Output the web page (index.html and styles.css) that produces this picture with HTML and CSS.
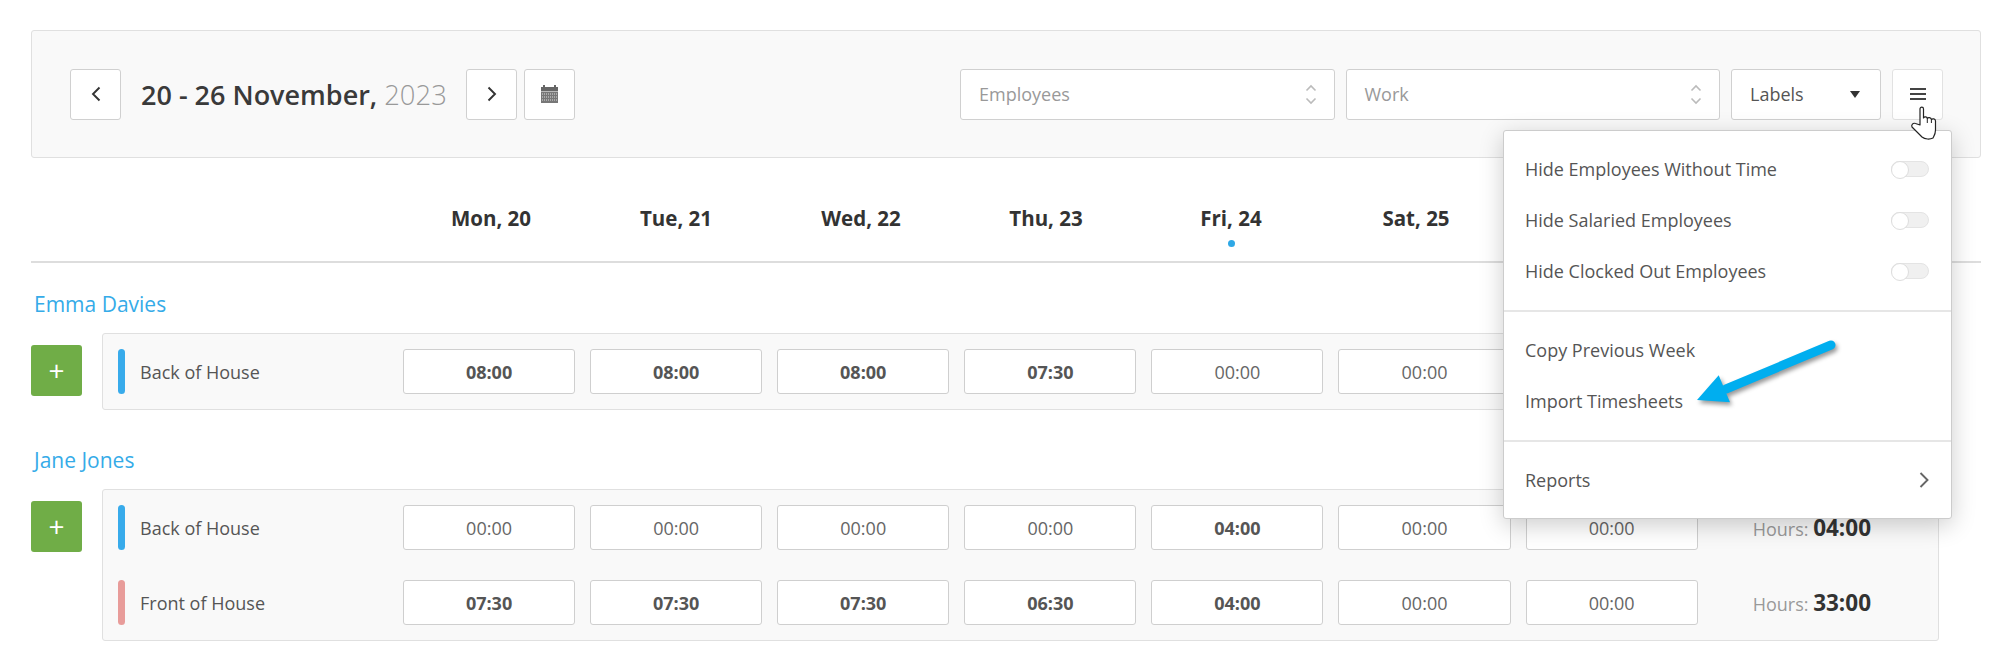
FILE: index.html
```html
<!DOCTYPE html>
<html lang="en">
<head>
  <meta charset="UTF-8" />
  <title>Timesheets</title>
  <link rel="stylesheet" href="styles.css">
</head>
<body>
  <div class="toolbar">
    <button class="btn-square">
      <svg width="10" height="16" viewBox="0 0 10 16"><path d="M8.5 1.5 2 8l6.5 6.5" fill="none" stroke="#333" stroke-width="1.9"/></svg>
    </button>
    <div class="week-title">20 - 26 November, <span class="week-year">2023</span></div>
    <button class="btn-square">
      <svg width="10" height="16" viewBox="0 0 10 16"><path d="M1.5 1.5 8 8l-6.5 6.5" fill="none" stroke="#333" stroke-width="1.9"/></svg>
    </button>
    <button class="btn-square btn-calendar">
      <svg width="17" height="18" viewBox="0 0 17 18">
        <path d="M0 2h2V0h2v2h9V0h2v2h2v4H0z" fill="#666"/>
        <rect y="6.5" width="17" height="11.5" fill="#777"/>
        <path d="M1 9h15M1 12h15M1 15h15" stroke="#ddd" stroke-width="1" stroke-dasharray="1 1"/>
      </svg>
    </button>

    <div class="filters">
      <div class="select select-wide">
        <span class="placeholder">Employees</span>
        <svg width="12" height="21" viewBox="0 0 12 21"><path d="M1.5 6.5 6 2l4.500 4.500M1.500 14.500 6 19l4.500-4.500" fill="none" stroke="#bbb" stroke-width="1.6"/></svg>
      </div>
      <div class="select select-wide">
        <span class="placeholder">Work</span>
        <svg width="12" height="21" viewBox="0 0 12 21"><path d="M1.5 6.500 6 2l4.500 4.500M1.500 14.500 6 19l4.500-4.500" fill="none" stroke="#bbb" stroke-width="1.6"/></svg>
      </div>
      <div class="select select-labels">
        <span>Labels</span>
        <span class="caret"></span>
      </div>
      <button class="btn-menu"><span class="burger"></span></button>
    </div>
  </div>

  <div class="days">
    <div>Mon, 20</div>
    <div>Tue, 21</div>
    <div>Wed, 22</div>
    <div>Thu, 23</div>
    <div class="today">Fri, 24</div>
    <div>Sat, 25</div>
  </div>

  <div class="employee">
    <a class="employee-name">Emma Davies</a>
    <div class="employee-body">
      <button class="btn-add">+</button>
      <div class="work-box">
        <div class="work-row">
          <span class="work-bar bar-blue"></span>
          <span class="work-label">Back of House</span>
          <div class="cell filled">08:00</div>
          <div class="cell filled">08:00</div>
          <div class="cell filled">08:00</div>
          <div class="cell filled">07:30</div>
          <div class="cell">00:00</div>
          <div class="cell">00:00</div>
          <div class="cell">00:00</div>
          <div class="hours">Hours: <b>31:30</b></div>
        </div>
      </div>
    </div>
  </div>

  <div class="employee">
    <a class="employee-name">Jane Jones</a>
    <div class="employee-body">
      <button class="btn-add">+</button>
      <div class="work-box">
        <div class="work-row">
          <span class="work-bar bar-blue"></span>
          <span class="work-label">Back of House</span>
          <div class="cell">00:00</div>
          <div class="cell">00:00</div>
          <div class="cell">00:00</div>
          <div class="cell">00:00</div>
          <div class="cell filled">04:00</div>
          <div class="cell">00:00</div>
          <div class="cell">00:00</div>
          <div class="hours">Hours: <b>04:00</b></div>
        </div>
        <div class="work-row">
          <span class="work-bar bar-pink"></span>
          <span class="work-label">Front of House</span>
          <div class="cell filled">07:30</div>
          <div class="cell filled">07:30</div>
          <div class="cell filled">07:30</div>
          <div class="cell filled">06:30</div>
          <div class="cell filled">04:00</div>
          <div class="cell">00:00</div>
          <div class="cell">00:00</div>
          <div class="hours">Hours: <b>33:00</b></div>
        </div>
      </div>
    </div>
  </div>

  <div class="menu">
    <div class="menu-section">
      <div class="menu-item">Hide Employees Without Time <span class="toggle"></span></div>
      <div class="menu-item">Hide Salaried Employees <span class="toggle"></span></div>
      <div class="menu-item">Hide Clocked Out Employees <span class="toggle"></span></div>
    </div>
    <div class="menu-section">
      <div class="menu-item">Copy Previous Week</div>
      <div class="menu-item">Import Timesheets</div>
    </div>
    <div class="menu-section menu-last">
      <div class="menu-item">Reports
        <svg width="10" height="16" viewBox="0 0 10 16"><path d="M1.500 1 8.500 8l-7 7" fill="none" stroke="#666" stroke-width="1.900"/></svg>
      </div>
    </div>
  </div>

  <svg class="arrow" width="150" height="72" viewBox="0 0 150 72">
    <line x1="141" y1="7" x2="36" y2="51" stroke="#00aeef" stroke-width="9" stroke-linecap="round"/>
    <path d="M7 62 28.700 37.300 40 64.300z" fill="#00aeef"/>
  </svg>

  <svg class="hand" width="32" height="38" viewBox="0 0 32 38">
    <path d="M12 21V5c0-2.500 3.500-2.500 3.500 0v9c.5-1.500 3.500-1.500 3.800.5.700-1.500 3.700-1.300 4.100 1 1.100-1.300 4.100-.7 4.100 1.500v9c0 4-1.500 6-2.500 8-3 1.500-8 1.500-11-1L4 23c-1-2 1-4.500 3.500-3.500z" fill="#fff" stroke="#222" stroke-width="1.200" stroke-linejoin="round"/>
    <path d="M19.300 14.500V19M23.400 15.500V19" fill="none" stroke="#222" stroke-width="1"/>
  </svg>
</body>
</html>
```

FILE: styles.css
```css
* {
  box-sizing: border-box;
}

body {
  font-family: 'Open Sans', sans-serif;
  font-size: 18px;
  background-color: #ffffff;
  margin: 0;
  padding: 30px 29px 0 31px;
  color: #555;
  position: relative;
  overflow: hidden;
  height: 670px;
}

button {
  font-family: inherit;
  cursor: pointer;
}

.toolbar {
  display: flex;
  align-items: center;
  height: 128px;
  padding: 0 37px 0 38px;
  background: #f9f9f9;
  border: 1px solid #e0e0e0;
  border-radius: 3px;
}

.btn-square {
  width: 51px;
  height: 51px;
  padding: 0;
  display: flex;
  align-items: center;
  justify-content: center;
  background: #fff;
  border: 1px solid #d0d0d0;
  border-radius: 3px;
}

.btn-calendar {
  margin-left: 7px;
}

.week-title {
  width: 345px;
  padding-left: 20px;
  font-size: 27px;
  font-weight: 600;
  color: #3a3a3a;
  white-space: nowrap;
}

.week-year {
  font-weight: 300;
  font-size: 27.4px;
  color: #999;
}

.filters {
  margin-left: auto;
  display: flex;
  gap: 11px;
}

.select {
  height: 51px;
  display: flex;
  align-items: center;
  justify-content: space-between;
  background: #fff;
  border: 1px solid #d0d0d0;
  border-radius: 3px;
}

.select-wide {
  width: 374.5px;
  padding: 0 17px 0 18px;
}

.placeholder {
  color: #999;
}

.select-labels {
  width: 150px;
  padding: 0 20px 0 18px;
}

.caret {
  width: 0;
  height: 0;
  border-left: 5px solid transparent;
  border-right: 5px solid transparent;
  border-top: 7px solid #333;
}

.btn-menu {
  width: 51px;
  height: 51px;
  padding: 0;
  display: flex;
  align-items: center;
  justify-content: center;
  background: #fff;
  border: 1px solid #e2e2e2;
  border-radius: 3px;
}

.burger {
  display: block;
  width: 16px;
  height: 12px;
  border-top: 2px solid #444;
  border-bottom: 2px solid #444;
  position: relative;
}

.burger::after {
  content: "";
  position: absolute;
  left: 0;
  right: 0;
  top: 3px;
  height: 2px;
  background: #444;
}

.days {
  display: grid;
  grid-template-columns: repeat(7, 172px);
  gap: 13px;
  height: 105px;
  padding: 45px 0 0 374px;
  border-bottom: 2px solid #ddd;
  font-size: 20.5px;
  font-weight: 700;
  color: #333;
  text-align: center;
  line-height: 30px;
}

.today {
  position: relative;
}

.today::after {
  content: "";
  position: absolute;
  left: 83px;
  top: 37px;
  width: 7px;
  height: 7px;
  border-radius: 50%;
  background: #2ea8e6;
}

.employee {
  margin-top: 36px;
}

.days + .employee {
  margin-top: 27px;
}

.employee-name {
  display: block;
  padding-left: 3px;
  margin-bottom: 15px;
  font-size: 21px;
  line-height: 28px;
  color: #35abe8;
}

.employee-body {
  display: flex;
  align-items: flex-start;
  gap: 20px;
}

.btn-add {
  width: 51px;
  height: 51px;
  margin-top: 12px;
  padding: 0 0 2px;
  background: #70ad47;
  color: #fff;
  border: none;
  border-radius: 3px;
  font-size: 28px;
  font-weight: 400;
  line-height: 1;
}

.work-box {
  width: 1837px;
  padding: 15px;
  display: flex;
  flex-direction: column;
  gap: 30px;
  background: #f9f9f9;
  border: 1px solid #e0e0e0;
  border-radius: 3px;
}

.work-row {
  display: flex;
  align-items: center;
  height: 45px;
  gap: 15px;
}

.work-bar {
  width: 7px;
  height: 45px;
  border-radius: 4px;
  flex: none;
}

.bar-blue {
  background: #38abeb;
}

.bar-pink {
  background: #e89c9a;
}

.work-label {
  width: 248px;
}

.cell {
  width: 172.1px;
  height: 45px;
  display: flex;
  align-items: center;
  justify-content: center;
  background: #fff;
  border: 1px solid #cfcfcf;
  border-radius: 3px;
  color: #666;
}

.filled {
  font-weight: 700;
  color: #555;
}

.hours {
  margin-left: 40px;
  color: #999;
  white-space: nowrap;
}

.hours b {
  font-size: 22.5px;
  font-weight: 700;
  color: #333;
}

.menu {
  position: absolute;
  left: 1503px;
  top: 130px;
  width: 449px;
  height: 389px;
  background: #fff;
  border: 1px solid #ccc;
  border-radius: 3px;
  box-shadow: 0 6px 24px rgba(0, 0, 0, 0.2);
}

.menu-section {
  padding: 12px 0 14px;
  border-bottom: 2px solid #e6e6e6;
}

.menu-last {
  border-bottom: none;
}

.menu-item {
  height: 51px;
  padding: 0 22px 0 21px;
  display: flex;
  align-items: center;
  justify-content: space-between;
  color: #555;
}

.toggle {
  width: 38px;
  height: 16px;
  background: #f0f0f0;
  border: 1px solid #e4e4e4;
  border-radius: 8px;
  position: relative;
}

.toggle::before {
  content: "";
  position: absolute;
  left: -1px;
  top: -1px;
  width: 16px;
  height: 16px;
  background: #fff;
  border: 1px solid #ddd;
  border-radius: 50%;
}

.arrow {
  position: absolute;
  left: 1690px;
  top: 338px;
  overflow: visible;
  filter: drop-shadow(2px 3px 2px rgba(0, 0, 0, 0.4));
}

.hand {
  position: absolute;
  left: 1908px;
  top: 104px;
}
```
